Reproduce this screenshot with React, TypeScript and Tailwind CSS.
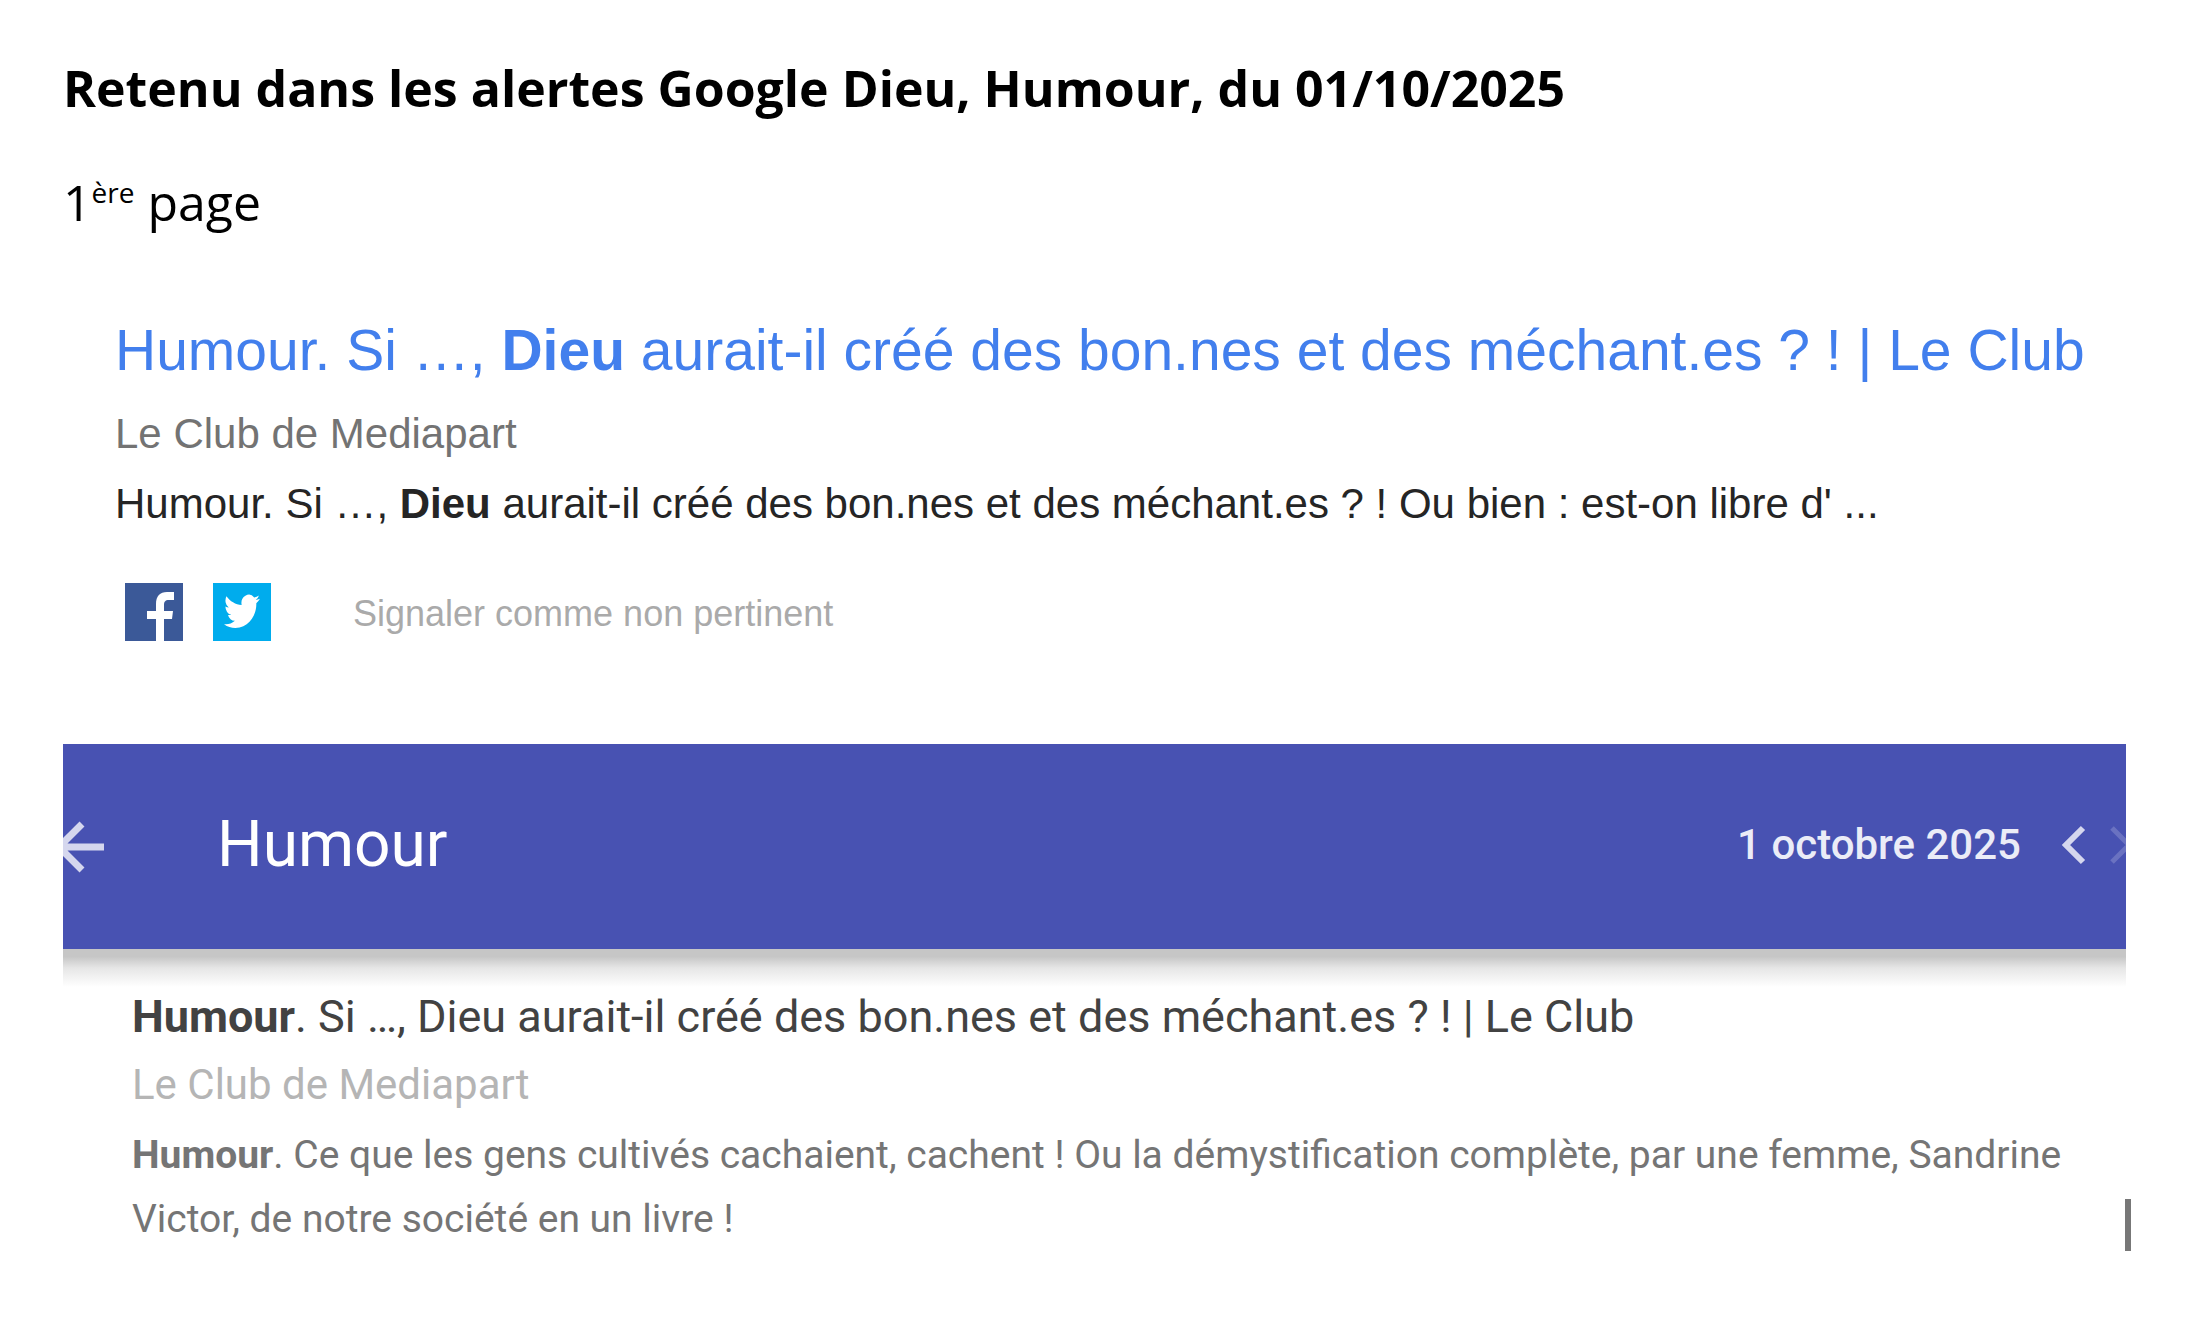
import type { ReactNode } from "react"

interface ShareLinkProps {
  label: string
  className: string
  children: ReactNode
}

function ShareLink({ label, className, children }: ShareLinkProps) {
  return (
    <a href="#" aria-label={label} className={`block size-[58px] ${className}`}>
      <svg viewBox="0 0 58 58" className="size-full" fill="#fff">
        {children}
      </svg>
    </a>
  )
}

function AlertResult() {
  return (
    <article className="pl-[52px] font-['Liberation_Sans',Arial,sans-serif]">
      <h2 className="text-[57px] leading-[72px] text-[#427fed]">
        <a href="#">
          Humour. Si …, <b>Dieu</b> aurait-il créé des bon.nes et des méchant.es ? ! | Le Club
        </a>
      </h2>
      <p className="mt-[18px] text-[42px] leading-[60px] text-[#737373]">Le Club de Mediapart</p>
      <p className="mt-[10px] text-[42px] leading-[60px] text-[#252525]">
        Humour. Si …, <b>Dieu</b> aurait-il créé des bon.nes et des méchant.es ? ! Ou bien : est-on libre d' ...
      </p>
      <div className="mt-[49px] flex items-center pl-[10px]">
        <ShareLink label="Facebook" className="bg-[#3b5998]">
          <path d="M31 58V36h-9v-8h9v-7c0-8 4-12 11-12h7v8h-5c-4 0-5 2-5 5v6h9l-1 8h-8v22z" />
        </ShareLink>
        <ShareLink label="Twitter" className="ml-[30px] bg-[#00aced]">
          <path
            transform="translate(11 8) scale(1.5 1.7)"
            d="M23.95 4.57a10 10 0 0 1-2.82.77 4.96 4.96 0 0 0 2.16-2.72c-.95.55-2 .96-3.13 1.18a4.92 4.92 0 0 0-8.38 4.48C7.69 8.09 4.07 6.13 1.64 3.16a4.92 4.92 0 0 0 1.52 6.57 4.9 4.9 0 0 1-2.23-.61v.06a4.92 4.92 0 0 0 3.95 4.83 5 5 0 0 1-2.21.08 4.94 4.94 0 0 0 4.6 3.42A9.87 9.87 0 0 1 0 19.54a13.99 13.99 0 0 0 7.55 2.21c9.05 0 14-7.5 14-13.98 0-.21 0-.42-.02-.63a9.94 9.94 0 0 0 2.46-2.55z"
          />
        </ShareLink>
        <a href="#" className="ml-[82px] pt-1 text-[36px] leading-[48px] text-[#aaa]">
          Signaler comme non pertinent
        </a>
      </div>
    </article>
  )
}

function AlertBar() {
  return (
    <header className="flex h-[205px] items-center overflow-hidden bg-[#4852b2] pb-1 font-[Roboto,sans-serif] text-white">
      <button aria-label="Retour" className="h-[60px] w-[42px]">
        <svg viewBox="0 0 42 60" className="h-full w-full" fill="none" stroke="#d5d7ee" strokeWidth="7">
          <path d="M41 32H-3M19 9-4 32l23 23" />
        </svg>
      </button>
      <h2 className="ml-[112px] text-[64px] leading-[72px]">Humour</h2>
      <span className="ml-auto text-[42px] leading-[60px] font-medium text-[#ebecf7]">1 octobre 2025</span>
      <button aria-label="Jour précédent" className="ml-[40px] h-[60px] w-[26px]">
        <svg viewBox="0 0 26 60" className="h-full w-full" fill="none" stroke="#d5d7ee" strokeWidth="6">
          <path d="M22 13 5 30l17 17" />
        </svg>
      </button>
      <button aria-label="Jour suivant" className="ml-[23px] h-[60px] w-[16px]" disabled>
        <svg viewBox="0 0 16 60" className="h-full w-full" fill="none" stroke="#6a72c1" strokeWidth="5">
          <path d="m2 13 17 17L2 47" />
        </svg>
      </button>
    </header>
  )
}

export default function App() {
  return (
    <main className="min-h-screen bg-white pt-[58px] pr-[74px] pb-[86px] pl-[63px]">
      <div className="font-['Open_Sans','Noto_Sans',sans-serif] text-[50px] leading-[60px] text-black">
        <h1 className="font-bold">Retenu dans les alertes Google Dieu, Humour, du 01/10/2025</h1>
        <p className="mt-[54px]">
          1<sup className="-top-[18px] text-[28px]">ère</sup> page
        </p>
      </div>

      <div className="mt-[82px]">
        <AlertResult />
      </div>

      <section className="mt-[103px]">
        <AlertBar />
        <div className="h-[38px] bg-linear-to-b from-[#c6c6c6] from-20% via-[#e6e6e6] to-white" />
        <div className="-mr-[5px] flex items-end justify-between">
          <article className="pl-[69px] font-[Roboto,sans-serif]">
            <h3 className="text-[45px] leading-[60px] text-[#424242]">
              <b>Humour</b>. Si …, Dieu aurait-il créé des bon.nes et des méchant.es ? ! | Le Club
            </h3>
            <p className="mt-[8px] text-[42px] leading-[60px] text-[#b5b5b5]">Le Club de Mediapart</p>
            <p className="mt-[8px] text-[39px] leading-[64px] text-[#757575]">
              <b>Humour</b>. Ce que les gens cultivés cachaient, cachent ! Ou la démystification complète, par une femme,
              Sandrine Victor, de notre société en un livre !
            </p>
          </article>
          <div className="h-[52px] w-[6px] shrink-0 bg-[#777]" />
        </div>
      </section>
    </main>
  )
}
